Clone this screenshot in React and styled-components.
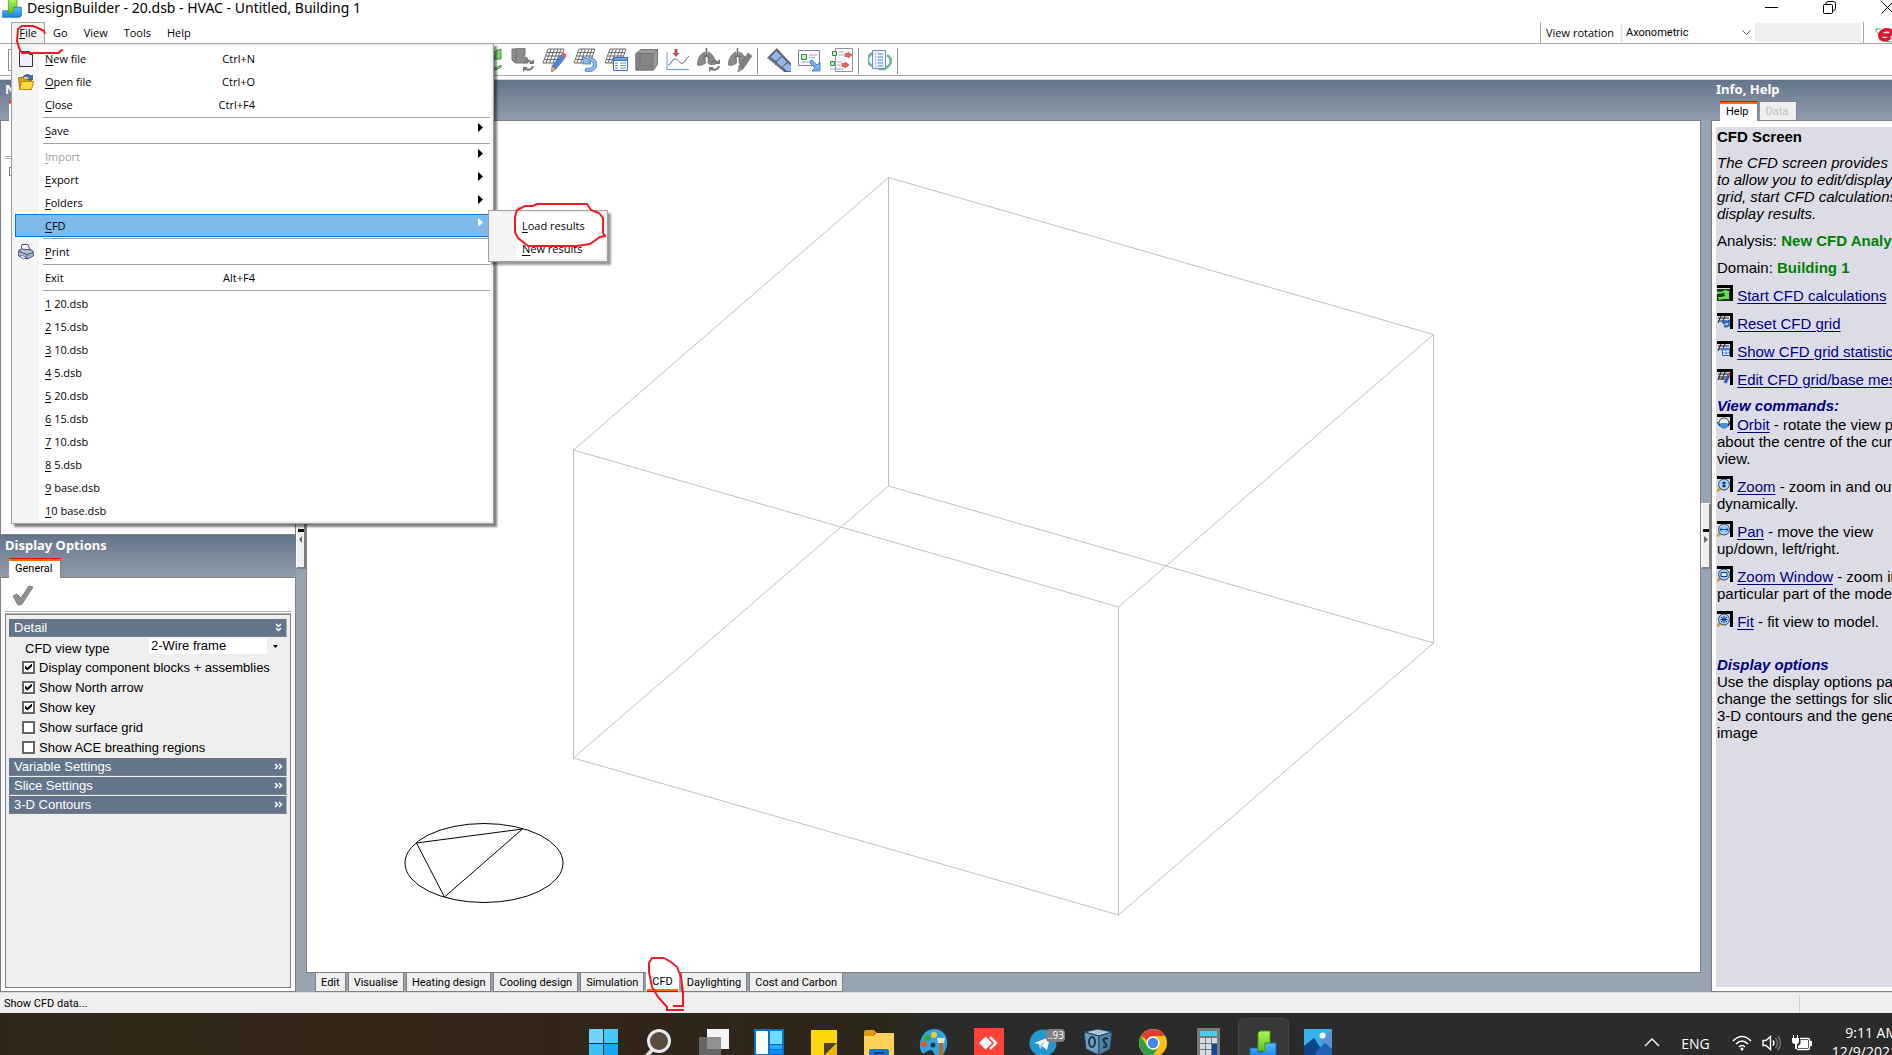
import React, { useState } from 'react';
import styled, { createGlobalStyle, css } from 'styled-components';

const UI_FONT = '"Open Sans", "Noto Sans", sans-serif';
const SMALL_FONT = 'Roboto, "Liberation Sans", sans-serif';
const ARIAL = '"Liberation Sans", Arial, sans-serif';

const GlobalStyle = createGlobalStyle`
    * {
        box-sizing: border-box;
    }
    body {
        margin: 0;
        overflow: hidden;
        background: #fff;
        color: #000;
        font-family: ${UI_FONT};
        font-size: 11px;
    }
    button, select, input {
        font: inherit;
        color: inherit;
        margin: 0;
        padding: 0;
        border: 0;
        background: none;
        border-radius: 0;
    }
`;

/* ---------- icons ---------- */

const BuilderIcon = ({ size = 28 }) => (
    <svg width={size} height={size} viewBox="0 0 28 28">
        <defs>
            <linearGradient id="dbBlue" x1="0" y1="0" x2="0" y2="1">
                <stop offset="0" stopColor="#5cc0ff" />
                <stop offset="1" stopColor="#1583ea" />
            </linearGradient>
            <linearGradient id="dbGreen" x1="0" y1="0" x2="0" y2="1">
                <stop offset="0" stopColor="#b0f45c" />
                <stop offset="1" stopColor="#5ec41c" />
            </linearGradient>
        </defs>
        <path d="M1 18h8v4h5v-9h13v12l-2 2H1z" fill="url(#dbBlue)" stroke="#0d62b8" />
        <path d="M9 3l2-2h10v12h-5v8H9z" fill="url(#dbGreen)" stroke="#47960f" />
    </svg>
);

const PageIcon = () => (
    <svg width="16" height="16" viewBox="0 0 16 16">
        <path d="M1.500 .5h10l3 3v12h-13z" fill="#eef" stroke="#333" />
        <path d="M11.500 .5v3h3" fill="#fff" stroke="#333" />
    </svg>
);

const FolderIcon = () => (
    <svg width="16" height="16" viewBox="0 0 16 16">
        <path d="M.5 3.500h5l1 1.500h7v10H1.500z" fill="#d9a21b" stroke="#a87708" />
        <path d="M5 3c2-3 6-3 8-1l1.500-1v5H10l1.500-1.500C10 2.500 7 2 5 3z" fill="#3f6fa8" stroke="#1d3d68" strokeWidth=".6" />
        <path d="M3.500 7.500h12l-2 8h-12z" fill="#ffd83d" stroke="#b98a0c" />
    </svg>
);

const PrinterIcon = () => (
    <svg width="16" height="16" viewBox="0 0 16 16">
        <path d="M3 7l1-6.500h6L12 6z" fill="#fff" stroke="#4a5078" />
        <path d="M.7 6.500l3-1.500 10 1 1.600 2v4l-6 3-8.600-3z" fill="#b9bfdb" stroke="#434a72" />
        <path d="M1 7.500l8 3v4M9 10.500l6-2" fill="none" stroke="#434a72" />
        <path d="M3 11l5 2-2 2-4-2z" fill="#eef" stroke="#434a72" strokeWidth=".7" />
        <circle cx="12" cy="11" r="1.200" fill="#5fcf3f" />
    </svg>
);

const Grid = () => (
    <g stroke="#6b6b6b" strokeWidth="1" fill="none">
        <path d="M6 1h16L17 15H1z M5 4.500h16M3.500 8h16M2.500 11.500h16" />
        <path d="M9 1L4 15M12.500 1L7.500 15M16 1l-5 14M19 1l-5 14" />
    </g>
);

const Cycle = ({ color = '#777' }) => (
    <g fill="none" stroke={color} strokeWidth="2">
        <path d="M13 15c2-3 6-3 8 0M22 18c-1 4-6 5-8 2" />
        <path d="M23 11v5h-5zM12 24v-5h5z" fill={color} stroke="none" />
    </g>
);

const Lungs = () => (
    <g fill="#8b8b8b" stroke="#6e6e6e" strokeWidth=".8">
        <path d="M8 4C4 5 0 11 .5 17c2 1 6 0 8-2zM11 4c4 1 8 7 7.500 12-3 1-6 1-7.500-1z" />
        <path d="M9.500 0v9M9.500 7l-3 3M9.500 7l3 3" fill="none" strokeWidth="1.500" />
    </g>
);

const Pencil = ({ body = '#4f83d6', tip = '#e4b37c', end = '#e65a5a' }) => (
    <g>
        <path d="M19 7l4 3-9 11-4-3z" fill={body} stroke="#3a5fa0" strokeWidth=".6" />
        <path d="M19 7l2-3 4 3-2 3z" fill={end} />
        <path d="M10 18l4 3-4.500 3z" fill={tip} stroke="#555" strokeWidth=".6" />
    </g>
);

const GreyPencil = () => (
    <g>
        <path d="M20 5l4 3-9 13-4-3z" fill="#808080" stroke="#666" strokeWidth=".6" />
        <path d="M11 18l4 3-5 3z" fill="#9a9a9a" stroke="#666" strokeWidth=".6" />
    </g>
);

const toolDrawings = {
    page: <path d="M.5 1.500h16l6 6v15h-22z" fill="#fff" stroke="#8b8b8b" />,
    calculate: (
        <g>
            <path d="M2 5c5 4 10 3 14-2l5-2v10H12l3-2C12 12 6 12 2 9z" fill="#86d977" stroke="#3f9a3b" />
            <path d="M3 15h8l-3 3c5 3 9 2 13-1v2c-5 4-10 4-14 1l-4 2z" fill="#86d977" stroke="#3f9a3b" />
        </g>
    ),
    blocks: (
        <g>
            <path d="M1 1h4l1-1h8v7l-3 2h4l2 2v4H4l-3-3z" fill="#8d8d8d" stroke="#747474" />
            <path d="M5 1v12" stroke="#6a6a6a" />
            <Cycle />
        </g>
    ),
    gridEdit: <g><Grid /><Pencil /></g>,
    gridReset: (
        <g>
            <Grid />
            <path d="M10 8v8h8l-3-3c4-1 6 2 5 5-1 2-4 3-7 2l-1 3c6 2 11-1 12-6 0-6-6-9-11-6z" fill="#8cb9ee" stroke="#3c74bd" strokeWidth=".8" />
        </g>
    ),
    gridTable: (
        <g>
            <Grid />
            <path d="M9.500 9.500h14v13h-14z" fill="#fff" stroke="#3a72b8" />
            <path d="M9.500 9.500h14v3h-14z" fill="#6aa3e6" stroke="#3a72b8" />
            <path d="M11 15h3M16 15h6M11 17.500h3M16 17.500h6M11 20h3M16 20h6" stroke="#5b91d4" />
        </g>
    ),
    cube: (
        <g stroke="#747474">
            <path d="M1 5.500l5-4h16.500v15l-4 5.500H1z" fill="#9a9a9a" />
            <path d="M1 5.500h17V22H1z" fill="#858585" />
            <path d="M18 5.500l4.500-4M5 5.500V18h13M5 18l-4 4" fill="none" />
        </g>
    ),
    chart: (
        <g fill="none">
            <path d="M1 4v17.500h22" stroke="#6e9bd4" />
            <path d="M2 17c3 0 4-6 7-6 4 0 5 6 8 4 3-1 3-5 6-7" stroke="#6b6580" />
            <path d="M8.500 1h3v4h2l-3.500 4-3.500-4h2z" fill="#b85454" />
        </g>
    ),
    lungsCycle: <g><Lungs /><Cycle /></g>,
    lungsEdit: <g><Lungs /><GreyPencil /></g>,
    film: (
        <g>
            <path d="M10 0l14 15v9h-7L0 10z" fill="#5b6271" />
            <path d="M9.500 3l5 5-5.500 5-5.500-4zM15 9l5 5-5.500 5-5-5zM21 15l3 3v5h-4l-4.500-4z" fill="#8fb8ea" />
            <path d="M11 1.500l13 14M1.500 10.500L17 23.500" stroke="#e8ecf4" strokeDasharray="1.500 1.800" />
        </g>
    ),
    imageExport: (
        <g>
            <path d="M.5 2.500h21v15H.5z" fill="#fafaff" stroke="#7f7fa0" />
            <path d="M3.500 6.500h5v5h-5z" fill="#bdeeb0" stroke="#3d8a3a" />
            <path d="M11 7h8M11 9.500h6M3 14h9" stroke="#a6a6cf" />
            <path d="M12 13l2-1 5 5 3-3v9H14l3-3-4-4z" fill="#77aee8" stroke="#3671b8" strokeWidth=".8" />
        </g>
    ),
    report: (
        <g>
            <path d="M6.500 .5h17v23h-17z" fill="#fafaff" stroke="#9292a8" />
            <path d="M3.500 3.500h4v4h-4zM1.500 13.500h4v4h-4z" fill="#bdeeb0" stroke="#3d8a3a" />
            <path d="M10 4h5M10 7h5M8 14h5M8 17h4M1 21h14" stroke="#a6a6cf" />
            <path d="M16 5.500h3V4l4 3-4 3V8.500h-3zM13 15.500h3V14l4 3-4 3v-1.500h-3z" fill="#f2644b" stroke="#b8402c" strokeWidth=".6" />
        </g>
    ),
    list: (
        <g>
            <path d="M5 5C-2 8-1 15 4 18M19 7c6 4 5 9-1 13-3 2-7 1-9 0" fill="none" stroke="#6db58a" strokeWidth="2.500" />
            <path d="M4.500 2.500h13v18h-13z" fill="#eef4ff" stroke="#6b8fc0" />
            <path d="M7 6h1M7 9h1M7 12h1M7 15h1M7 18h1M9.500 6H15M9.500 9H15M9.500 12H15M9.500 15H15M9.500 18H15" stroke="#5b82bd" />
        </g>
    ),
};

const helpDrawings = {
    calculate: (
        <g>
            <path d="M0 4h13v12H0z" fill="#1c3a1a" />
            <path d="M0 6c3 2 6 0 8-1l4 1v4H7l1-2-8 1zM1 12h4l4-2h3v4H7l-5 1z" fill="#5fe052" />
        </g>
    ),
    reset: (
        <g>
            <path d="M1 5h11M1 8h9M4 3L1 10M8 3L5 10" stroke="#222" fill="none" />
            <path d="M6 7l1 3 5-2c2 4-1 6-5 5" fill="none" stroke="#2e6cc0" strokeWidth="2.500" />
        </g>
    ),
    table: (
        <g>
            <path d="M1 5h11M1 8h9M4 3L1 10M8 3L5 10" stroke="#222" fill="none" />
            <path d="M5.500 7.500h7v7h-7z" fill="#fff" stroke="#2d62b0" />
            <path d="M5 8.500h8" stroke="#3d86e0" strokeWidth="2" />
            <path d="M6 12h6M9 10v5" stroke="#3d86e0" />
        </g>
    ),
    edit: (
        <g>
            <path d="M1 5h11M1 8h9M1 10h8M4 3L1 11M8 3L5 11" stroke="#222" fill="none" />
            <path d="M12 6l-4 8" stroke="#2c5bb5" strokeWidth="3" />
            <path d="M12.500 4l-1 3" stroke="#d04040" strokeWidth="2" />
        </g>
    ),
    orbit: (
        <g>
            <circle cx="7" cy="9" r="5" fill="#eef6ff" stroke="#444" />
            <path d="M2 10c4-2 7 0 11-1-1 6-8 7-11 1z" fill="#3b8fe6" />
            <path d="M0 8l3 4M14 6l-3 6" stroke="#111" />
        </g>
    ),
    zoom: <path d="M7 5.500v6M5 7h4M5 10h4" stroke="#123" strokeWidth="1.200" />,
    pan: <path d="M3 8.500h8M5 6.500l-2 2 2 2M9 6.500l2 2-2 2" stroke="#124a9a" fill="none" />,
    window: <path d="M4 6.500h6v4H4z" stroke="#123a80" fill="#d6ecff" />,
    fit: <path d="M4 6l6 5M10 6l-6 5M7 5v7M3.500 8.500h7" stroke="#14307a" fill="none" />,
};

const lensIcons = ['zoom', 'pan', 'window', 'fit'];

const HelpIcon = ({ name }) => (
    <HelpGlyph width="16" height="16" viewBox="0 0 16 16">
        {lensIcons.includes(name) && (
            <g>
                <path d="M0 15l4-3" stroke="#d79a2c" strokeWidth="3" />
                <circle cx="7" cy="8.500" r="5.500" fill="#9fd0fb" stroke="#3c4a66" />
            </g>
        )}
        {helpDrawings[name]}
        <path d="M0 0h16v16h-3V3H0z" fill="#000" />
    </HelpGlyph>
);

/* taskbar icons, drawn in a 30px box */
const taskIcons = {
    Start: (
        <g>
            <path d="M0 0h14v14H0z" fill="#6fd5ff" />
            <path d="M15 0h14v14H15z" fill="#46c8fc" />
            <path d="M0 15h14v14H0z" fill="#3cc0fa" />
            <path d="M15 15h14v14H15z" fill="#1ba5f5" />
        </g>
    ),
    Search: (
        <g>
            <path d="M9 20l-9 10" stroke="#dcdcdc" strokeWidth="4" />
            <circle cx="15" cy="12" r="10.500" fill="#5a4d40" stroke="#e6e8ea" strokeWidth="3" />
        </g>
    ),
    'Task view': (
        <g>
            <path d="M8 0h22v20H8z" fill="#f4f4f4" />
            <path d="M0 8h22v22H0z" fill="#777" opacity=".8" />
        </g>
    ),
    Widgets: (
        <g>
            <path d="M0 0h30v30H0z" fill="#0a6ecb" />
            <rect x="2" y="2" width="12" height="23" rx="1" fill="#fff" />
            <path d="M16 2h12v13H16z" fill="#6fdcff" />
            <path d="M16 16h12v4H16z" fill="#1ea9ff" />
            <path d="M16 21h12v4H16z" fill="#0a8cf5" />
        </g>
    ),
    'Sticky Notes': (
        <g>
            <path d="M2 1h26v29H2z" fill="#ffd60a" />
            <path d="M15 14h13L15 27z" fill="#4b4336" />
            <path d="M28 14v16H15v-3z" fill="#f2b40c" />
        </g>
    ),
    'File Explorer': (
        <g>
            <path d="M0 3q0-2 2-2h8l3 3h-2l-2 3H0z" fill="#e09c10" />
            <path d="M0 7h9l3-3h18v26H0z" fill="#ffcf58" />
            <path d="M5 30v-8q0-2 2-2h16q2 0 2 2v8z" fill="#1076cf" />
            <path d="M10 24h10" stroke="#0a3d78" strokeWidth="2" />
        </g>
    ),
    Paint: (
        <g>
            <path d="M15 0c9 0 14 7 13 16-1 7-5 12-9 12-5 0-3-6-7-7-4 0-6 5-9 3-5-7-1-24 12-24z" fill="#2fa4e4" />
            <circle cx="15" cy="6" r="3" fill="#ffc52e" />
            <circle cx="8" cy="9" r="3" fill="#3aa82f" />
            <circle cx="5" cy="15" r="3" fill="#e8552d" />
            <circle cx="14" cy="16" r="2.500" fill="#26323b" />
            <path d="M18 9h8l-1 5h-6z" fill="#f3e3c5" />
            <path d="M20 14h4v16h-4z" fill="#b4692c" />
        </g>
    ),
    AnyDesk: (
        <g>
            <path d="M0-1h30v31H0z" fill="#ff4136" />
            <path d="M5 14l6.500-6.500L18 14l-6.500 6.500z" fill="#fff" />
            <path d="M16 8l6 6-6 6" fill="none" stroke="#fff" strokeWidth="2.500" />
        </g>
    ),
    Telegram: (
        <g>
            <circle cx="14" cy="14" r="13.500" fill="#2598d2" />
            <path d="M5 14l16-6-3 13-5-4-2 3-1-5z" fill="#fff" />
            <path d="M11 16l7-6-5 7-2 3z" fill="#a9cfe6" />
        </g>
    ),
    OpenStudio: (
        <g stroke="#24445c">
            <path d="M0 3l14-3 14 3-13 4z" fill="#a8c8dc" />
            <path d="M0 3l15 4v19L2 20z" fill="#6f9cbb" />
            <path d="M28 3L15 7v19l11-6z" fill="#4f81a4" />
            <ellipse cx="8" cy="13" rx="3" ry="5" fill="none" stroke="#17344a" strokeWidth="2" />
            <path d="M24 10c-4-2-6 1-3 4s1 5-2 4" fill="none" stroke="#17344a" strokeWidth="2" />
        </g>
    ),
    Chrome: (
        <g>
            <circle cx="14" cy="14" r="14" fill="#fbc116" />
            <path d="M2 7a14 14 0 0 1 24 0H14a7 7 0 0 0-6 4z" fill="#df3f33" />
            <path d="M2 7a14 14 0 0 0 11 21l6-9a7 7 0 0 1-11-2z" fill="#2b9f4a" />
            <circle cx="14" cy="14" r="6.500" fill="#fff" />
            <circle cx="14" cy="14" r="5.200" fill="#4285f4" />
        </g>
    ),
    Calculator: (
        <g>
            <path d="M3-1h23v31H3z" fill="#747a80" />
            <path d="M6 2h17v5H6z" fill="#42d0f0" />
            <path d="M6 9h5v5H6zM12 9h5v5h-5zM18 9h5v5h-5zM6 15h5v5H6zM12 15h5v5h-5zM6 21h5v5H6zM12 21h5v5h-5z" fill="#d9dde2" />
            <path d="M18 15h5v11h-5z" fill="#0b4a94" />
        </g>
    ),
    DesignBuilder: <BuilderIcon />,
    Photos: (
        <g>
            <path d="M0 0h28v30H0z" fill="#35b2ec" />
            <path d="M28 0v20L14 12z" fill="#6f7fd0" opacity=".6" />
            <path d="M0 17l10-8 14 21H0z" fill="#0d4387" />
            <path d="M12 22l9-8 7 6v10H12z" fill="#1f62b5" />
            <circle cx="18.500" cy="6.500" r="3" fill="#fff" />
        </g>
    ),
};

/* ---------- data ---------- */

const fileMenu = [
    { label: 'New file', keys: 'Ctrl+N', icon: <PageIcon /> },
    { label: 'Open file', keys: 'Ctrl+O', icon: <FolderIcon /> },
    { label: 'Close', keys: 'Ctrl+F4' },
    'separator',
    { label: 'Save', more: true },
    'separator',
    { label: 'Import', more: true, disabled: true },
    { label: 'Export', more: true },
    { label: 'Folders', more: true },
    { label: 'CFD', more: true, open: ['Load results', 'New results'] },
    'separator',
    { label: 'Print', icon: <PrinterIcon /> },
    'separator',
    { label: 'Exit', keys: 'Alt+F4', plain: true },
    'separator',
    { label: '1 20.dsb' },
    { label: '2 15.dsb' },
    { label: '3 10.dsb' },
    { label: '4 5.dsb' },
    { label: '5 20.dsb' },
    { label: '6 15.dsb' },
    { label: '7 10.dsb' },
    { label: '8 5.dsb' },
    { label: '9 base.dsb' },
    { label: '10 base.dsb' },
];

const toolGroups = [
    ['calculate', 'blocks', 'gridEdit', 'gridReset', 'gridTable', 'cube', 'chart', 'lungsCycle', 'lungsEdit'],
    ['film', 'imageExport', 'report'],
    ['list'],
];

const viewTabs = ['Edit', 'Visualise', 'Heating design', 'Cooling design', 'Simulation', 'CFD', 'Daylighting', 'Cost and Carbon'];

const commands = [
    ['calculate', 'Start CFD calculations'],
    ['reset', 'Reset CFD grid'],
    ['table', 'Show CFD grid statistics'],
    ['edit', 'Edit CFD grid/base mesh'],
];

const viewCommands = [
    ['orbit', 'Orbit', ' - rotate the view point', 'about the centre of the current', 'view.'],
    ['zoom', 'Zoom', ' - zoom in and out', 'dynamically.'],
    ['pan', 'Pan', ' - move the view', 'up/down, left/right.'],
    ['window', 'Zoom Window', ' - zoom in on a', 'particular part of the model.'],
    ['fit', 'Fit', ' - fit view to model.'],
];

/* ---------- pieces ---------- */

const Mnemonic = ({ text }) => (
    <span><u>{text[0]}</u>{text.slice(1)}</span>
);

const FileMenu = () => (
    <Menu>
        {fileMenu.map((item, i) => item === 'separator' ? <Separator key={i} /> : (
            <ItemBox key={i}>
                <Item $active={!!item.open} disabled={item.disabled}>
                    <ItemIcon>{item.icon}</ItemIcon>
                    {item.plain ? <span>{item.label}</span> : <Mnemonic text={item.label} />}
                    {item.keys && <Keys>{item.keys}</Keys>}
                    {item.more && (
                        <MoreArrow width="5" height="9" viewBox="0 0 5 9">
                            <path d="M0 0l5 4.500L0 9z" fill={item.open ? '#fff' : '#000'} />
                        </MoreArrow>
                    )}
                </Item>
                {item.open && (
                    <SubMenu>
                        {item.open.map(label => (
                            <Item key={label}>
                                <ItemIcon />
                                <Mnemonic text={label} />
                            </Item>
                        ))}
                    </SubMenu>
                )}
            </ItemBox>
        ))}
    </Menu>
);

const SectionArrow = ({ down }) => (
    <svg width="9" height="9" viewBox="0 0 9 9">
        <path
            d={down ? 'M2 1l2.500 2.500L7 1M2 5l2.500 2.500L7 5' : 'M1 2l2.500 2.500L1 7M5 2l2.500 2.500L5 7'}
            fill="none"
            stroke="#fff"
            strokeWidth="1.500"
        />
    </svg>
);

const DisplayOptions = () => {
    const [options, setOptions] = useState([
        { label: 'Display component blocks + assemblies', on: true },
        { label: 'Show North arrow', on: true },
        { label: 'Show key', on: true },
        { label: 'Show surface grid', on: false },
        { label: 'Show ACE breathing regions', on: false },
    ]);

    const toggle = (index) => {
        setOptions(options.map((o, i) => i === index ? { ...o, on: !o.on } : o));
    }

    return (
        <Panel>
            <ApplyRow>
                <ApplyButton aria-label="Apply">
                    <svg width="22" height="21" viewBox="0 0 22 21">
                        <path d="M1 11l4-2 4 4L17 1l4 1L10 19l-4 1z" fill="#909090" stroke="#7c7c7c" />
                    </svg>
                </ApplyButton>
            </ApplyRow>
            <OptionsBox>
                <SectionBar>Detail <SectionArrow down /></SectionBar>
                <SelectRow>
                    <label htmlFor="view-type">CFD view type</label>
                    <SelectBox>
                        <PlainSelect id="view-type">
                            <option>2-Wire frame</option>
                        </PlainSelect>
                        <SelectArrow>
                            <svg width="5" height="3" viewBox="0 0 5 3"><path d="M0 0h5L2.500 3z" /></svg>
                        </SelectArrow>
                    </SelectBox>
                </SelectRow>
                <CheckList>
                    {options.map((o, i) => (
                        <CheckRow key={o.label}>
                            <CheckBox type="checkbox" checked={o.on} onChange={() => toggle(i)} />
                            {o.label}
                        </CheckRow>
                    ))}
                </CheckList>
                {['Variable Settings', 'Slice Settings', '3-D Contours'].map(name => (
                    <SectionBar key={name}>{name} <SectionArrow /></SectionBar>
                ))}
            </OptionsBox>
        </Panel>
    );
}

const Drawing = () => (
    <Canvas viewBox="307 121 1393 851" preserveAspectRatio="xMidYMid meet">
        <g fill="none" stroke="#c0c0c0">
            <path d="M888.500 177.500L1433.500 334.500L1118.500 607L573.500 450z" />
            <path d="M888.500 486L1433.500 643L1118.500 915L573.500 758z" />
            <path d="M888.500 177.500V486M1433.500 334.500V643M1118.500 607V915M573.500 450V758" />
        </g>
        <g fill="none" stroke="#000">
            <ellipse cx="484" cy="863" rx="79" ry="39.500" />
            <path d="M416.500 843L522.500 829L444.500 897z" />
        </g>
    </Canvas>
);

const HelpPanel = () => (
    <HelpText>
        <HelpTitle>CFD Screen</HelpTitle>
        <Intro>
            The CFD screen provides tools<br />
            to allow you to edit/display the<br />
            grid, start CFD calculations and<br />
            display results.
        </Intro>
        <Line>Analysis: <Value>New CFD Analysis</Value></Line>
        <Line>Domain: <Value>Building 1</Value></Line>
        {commands.map(([icon, label]) => (
            <Command key={icon}><HelpIcon name={icon} /> <HelpLink href="#">{label}</HelpLink></Command>
        ))}
        <HelpHeading>View commands:</HelpHeading>
        {viewCommands.map(([icon, label, first, ...rest]) => (
            <ViewCommand key={icon}>
                <HelpIcon name={icon} /> <HelpLink href="#">{label}</HelpLink>{first}
                {rest.map(line => <div key={line}>{line}</div>)}
            </ViewCommand>
        ))}
        <HelpHeading $spaced>Display options</HelpHeading>
        <div>
            Use the display options panel to<br />
            change the settings for slices,<br />
            3-D contours and the general<br />
            image
        </div>
    </HelpText>
);

const Handle = ({ flip }) => (
    <Splitter>
        <Grip aria-label="Collapse panel">
            <svg width="6" height="14" viewBox="0 0 6 14">
                <path d="M0 0h6v3H0z" />
                <path d={flip ? 'M1 7l4 3.500L1 14z' : 'M4 7L1 10.500 4 14z'} fill="#666" />
            </svg>
        </Grip>
    </Splitter>
);

const Taskbar = () => (
    <TaskbarRow>
        <span />
        <Tasks>
            {Object.keys(taskIcons).map(name => (
                <Task key={name} aria-label={name} $active={name === 'DesignBuilder'}>
                    <svg width="30" height="30" viewBox="0 -1 30 30">{taskIcons[name]}</svg>
                    {name === 'Telegram' && <Unread>..93</Unread>}
                </Task>
            ))}
        </Tasks>
        <Tray>
            <svg width="16" height="9" viewBox="0 0 16 9"><path d="M1 8l7-7 7 7" fill="none" stroke="#eee" strokeWidth="1.500" /></svg>
            <Language>ENG</Language>
            <TrayIcons>
                <svg width="20" height="16" viewBox="0 0 20 16" fill="none" stroke="#fff" strokeWidth="1.600">
                    <path d="M1 6q9-9 18 0M4 9q6-6 12 0M7 12q3-3 6 0" />
                    <circle cx="10" cy="14" r="1.500" fill="#fff" stroke="none" />
                </svg>
                <svg width="20" height="16" viewBox="0 0 20 16" fill="none" stroke="#fff" strokeWidth="1.400">
                    <path d="M1 5.500h3L8.500 1.500v13L4 10.500H1z" />
                    <path d="M11 5.500q2 2.500 0 5" />
                    <path d="M13.500 3q4 5 0 10M16 1q5 7 0 14" stroke="#777" />
                </svg>
                <svg width="20" height="16" viewBox="0 0 20 16">
                    <path d="M0 3h7v3q0 3-2 3v5H3V9Q0 9 0 6zM1 0h1v3H1zM5 0h1v3H5z" fill="#fff" />
                    <path d="M8 3.500h8q1.500 0 1.500 1.500v8q0 1.500-1.500 1.500H5" fill="none" stroke="#fff" strokeWidth="1.400" />
                    <path d="M8.500 5H16v8H6V11l2.500-2zM18 6h2v5h-2z" fill="#fff" />
                </svg>
            </TrayIcons>
            <Clock>9:11 AM<br />12/9/2021</Clock>
        </Tray>
    </TaskbarRow>
);

/* red pen marks lying over the window */
const PenMarks = () => (
    <Marks width="700" height="1020" viewBox="0 0 700 1020">
        <path d="M45 34L44 31L38 28L33 26H22L18 29L17 41L19 48L22 53H59L60 51L63 50" />
        <path d="M537 204H587L591 210L599 213L603 218V233L605 236L600 237L590 244L577 246H528L518 238L515 232V217L517 210L525 206L533 206z" />
        <path d="M664 958H652L649 963V972L652 987L658 997L667 1007V1010H684M673 1006H683V992L681 977L677 967L671 962L664 958" />
    </Marks>
);

const App = () => {
    const [tab, setTab] = useState('CFD');

    return (
        <Window>
            <GlobalStyle />
            <TitleBar>
                <BuilderIcon size={20} />
                <Title>DesignBuilder - 20.dsb - HVAC - Untitled, Building 1</Title>
                <WindowButton aria-label="Minimise"><svg width="13" height="13" viewBox="0 0 13 13"><path d="M0 6.500h13" /></svg></WindowButton>
                <WindowButton aria-label="Restore">
                    <svg width="13" height="13" viewBox="0 0 13 13">
                        <path d="M.5 4.500q0-1 1-1h7q1 0 1 1v7q0 1-1 1h-7q-1 0-1-1zM3 3.500V2.500Q3 .5 5 .5h5.500q2 0 2 2v5q0 2-2 2h-1" />
                    </svg>
                </WindowButton>
                <WindowButton aria-label="Close"><svg width="13" height="13" viewBox="0 0 13 13"><path d="M.5.5l12 12M12.500.5l-12 12" /></svg></WindowButton>
            </TitleBar>
            <MenuBar>
                <MenuHolder>
                    <MenuButton $open><Mnemonic text="File" /></MenuButton>
                    <FileMenu />
                </MenuHolder>
                {['Go', 'View', 'Tools', 'Help'].map(name => <MenuButton key={name}>{name}</MenuButton>)}
                <Rotation>
                    <RotationLabel htmlFor="rotation">View rotation</RotationLabel>
                    <RotationBox>
                        <PlainSelect id="rotation">
                            <option>Axonometric</option>
                        </PlainSelect>
                        <svg width="9" height="6" viewBox="0 0 9 6"><path d="M.5.5l4 4 4-4" fill="none" stroke="#555" /></svg>
                    </RotationBox>
                    <EmptyField />
                </Rotation>
                <Brand>
                    <svg width="24" height="16" viewBox="0 0 24 16">
                        <path d="M6 2H1q-1 3 3 5M8 13q6 4 14 0" fill="none" stroke="#35b35a" />
                        <path d="M6 8h9q3-4-1-5-6-1-9 4-1 5 4 6 4 0 6-3" fill="none" stroke="#e0142c" strokeWidth="3.500" />
                    </svg>
                </Brand>
            </MenuBar>
            <Toolbar>
                <ToolButton aria-label="New"><svg width="24" height="24" viewBox="0 0 24 24">{toolDrawings.page}</svg></ToolButton>
                <HiddenTools />
                {toolGroups.map((group, i) => (
                    <ToolGroup key={i}>
                        {group.map(name => (
                            <ToolButton key={name} aria-label={name}>
                                <svg width="24" height="24" viewBox="0 0 24 24">{toolDrawings[name]}</svg>
                            </ToolButton>
                        ))}
                    </ToolGroup>
                ))}
            </Toolbar>
            <Workspace>
                <LeftColumn>
                    <PanelHead>
                        <PanelTitle>Navigate</PanelTitle>
                        <Tabs><Tab $active>Site</Tab></Tabs>
                    </PanelHead>
                    <Panel><NavTools /><NavNode /></Panel>
                    <PanelHead $shaded>
                        <PanelTitle>Display Options</PanelTitle>
                        <Tabs><Tab $active>General</Tab></Tabs>
                    </PanelHead>
                    <DisplayOptions />
                </LeftColumn>
                <Handle />
                <CenterColumn>
                    <CanvasBox><Drawing /></CanvasBox>
                    <ViewTabs>
                        {viewTabs.map(name => (
                            <ViewTab key={name} $active={name === tab} onClick={() => setTab(name)}>{name}</ViewTab>
                        ))}
                    </ViewTabs>
                </CenterColumn>
                <Handle flip />
                <RightColumn>
                    <PanelHead>
                        <PanelTitle>Info, Help</PanelTitle>
                        <Tabs>
                            <Tab $active>Help</Tab>
                            <Tab disabled>Data</Tab>
                        </Tabs>
                    </PanelHead>
                    <HelpFrame><HelpPanel /></HelpFrame>
                </RightColumn>
            </Workspace>
            <StatusBar>
                <span>Show CFD data...</span>
                <StatusCell />
            </StatusBar>
            <Taskbar />
            <PenMarks />
        </Window>
    );
}

/* ---------- styles ---------- */

const Window = styled.div`
    display: grid;
    grid-template-rows: 22px 22px 36px 1fr 21px 42px;
    grid-template-columns: 100%;
    height: 100vh;
    position: relative;
    overflow: hidden;
`;

const TitleBar = styled.header`
    display: flex;
    align-items: center;
    overflow: hidden;
    padding: 0 0 7px 2px;
`;

const Title = styled.h1`
    flex: 1;
    margin: 0 0 0 5px;
    font-family: "Noto Sans", sans-serif;
    font-size: 14px;
    line-height: 18px;
    font-weight: normal;
`;

const WindowButton = styled.button`
    width: 58px;
    height: 14px;
    flex: none;
    display: flex;
    justify-content: center;
    svg {
        fill: none;
        stroke: #000;
    }
    &:last-child {
        margin-right: -24px;
    }
`;

const MenuBar = styled.nav`
    display: flex;
    padding-left: 11px;
    border-bottom: 1px solid #a8a8a8;
`;

const MenuHolder = styled.div`
    position: relative;
    display: flex;
`;

const MenuButton = styled.button`
    padding: 0 8px;
    line-height: 20px;
    font-size: 11px;
    ${props => props.$open && css`
        width: 34px;
        padding: 0 7px;
        background: #f2f2f2;
        border: 1px solid #a0a0a0;
        border-bottom: 0;
    `}
`;

const Menu = styled.div`
    position: absolute;
    z-index: 5;
    top: 21px;
    left: 0;
    width: 483px;
    padding: 3px 3px 1px;
    border: 1px solid #a0a0a0;
    background: linear-gradient(to right, #f5f5f5 27px, #fff 27px);
    box-shadow: inset 0 0 0 2px #f0f0f0, 3px 3px 2px rgba(0, 0, 0, .5);
`;

const ItemBox = styled.div`
    position: relative;
`;

const Item = styled.button`
    display: flex;
    align-items: center;
    width: 100%;
    height: 23px;
    padding-right: 6px;
    border: 1px solid transparent;
    font-size: 11px;
    line-height: 16px;
    text-align: left;
    ${props => props.$active && css`
        background: #7eb9ea;
        border-color: #0078d7;
    `}
    &:disabled span {
        color: #a0a0a0;
    }
    span {
        flex: 0 1 90px;
        white-space: nowrap;
    }
    u {
        text-underline-offset: 2px;
    }
`;

const ItemIcon = styled.i`
    flex: none;
    width: 29px;
    padding-left: 2px;
    height: 16px;
`;

const Keys = styled.kbd`
    width: 120px;
    font-family: inherit;
    text-align: right;
`;

const MoreArrow = styled.svg`
    margin: 0 0 7px auto;
`;

const Separator = styled.hr`
    height: 1px;
    margin: 1px 0 1px 28px;
    border: 0;
    background: #a0a0a0;
`;

const SubMenu = styled.div`
    position: absolute;
    z-index: 6;
    top: -4px;
    left: 473px;
    width: 120px;
    padding: 3px 3px 1px;
    border: 1px solid #a0a0a0;
    background: linear-gradient(to right, #f5f5f5 27px, #fff 27px);
    box-shadow: inset 0 0 0 2px #f0f0f0, 3px 3px 2px rgba(0, 0, 0, .4);
`;

const Rotation = styled.div`
    display: flex;
    align-items: center;
    margin-left: auto;
    padding: 0 2px 0 5px;
    border: 1px solid #a8a8a8;
    border-width: 0 1px;
`;

const RotationLabel = styled.label`
    font-size: 11px;
    width: 77px;
    border-right: 3px solid #efefef;
    line-height: 18px;
`;

const PlainSelect = styled.select`
    appearance: none;
    flex: 1;
    min-width: 0;
    outline: 0;
`;

const RotationBox = styled.div`
    display: flex;
    align-items: center;
    width: 132px;
    padding: 0 4px 0 3px;
    font-family: ${SMALL_FONT};
`;

const EmptyField = styled.div`
    width: 106px;
    height: 19px;
    background: #efefef;
`;

const Brand = styled.div`
    width: 28px;
    padding: 5px 0 0 11px;
    overflow: hidden;
`;

const Toolbar = styled.div`
    display: flex;
    padding: 4px 0 0 8px;
    border-bottom: 1px solid #d8d8d8;
    background: linear-gradient(#a8a8a8, #a8a8a8) 0 31px / 100% 1px no-repeat, #fff;
`;

const HiddenTools = styled.div`
    width: 448px;
`;

const ToolButton = styled.button`
    width: 24px;
    height: 24px;
    flex: none;
    svg {
        display: block;
    }
`;

const ToolGroup = styled.div`
    display: flex;
    gap: 7px;
    height: 26px;
    padding-right: 5px;
    margin-right: 9px;
    border-right: 1px solid #909090;
`;

const Workspace = styled.main`
    display: grid;
    grid-template-columns: 296px 10px minmax(0, 1fr) 10px 181px;
    min-height: 0;
    background: linear-gradient(#64748a, #919dac) 0 0 / 100% 40px no-repeat, #97a3b0;
`;

const LeftColumn = styled.section`
    display: grid;
    grid-template-rows: 40px minmax(0, 1fr) 42px minmax(0, 1fr);
`;

const PanelHead = styled.div`
    display: flex;
    flex-direction: column;
    justify-content: space-between;
    ${props => props.$shaded && css`
        padding-top: 1px;
        background: linear-gradient(#64748a, #919dac);
    `}
`;

const PanelTitle = styled.h2`
    margin: 0;
    padding-left: 5px;
    color: #fff;
    font-family: "Noto Sans", sans-serif;
    font-size: 13px;
    line-height: 18px;
`;

const Tabs = styled.div`
    display: flex;
    gap: 2px;
    padding-left: 9px;
    margin-bottom: -1px;
    position: relative;
`;

const Tab = styled.button`
    height: 19px;
    padding: 0 8px 0 6px;
    border: 1px solid #808080;
    border-width: 1px 1px 0 0;
    background: #efefef;
    font-family: ${SMALL_FONT};
    line-height: 19px;
    &:disabled {
        color: #c0c0c0;
    }
    ${props => props.$active && css`
        height: 20px;
        border-top: 1px solid #f00;
        background: linear-gradient(#ff7000 2px, #fff 2px);
    `}
`;

const Panel = styled.div`
    display: flex;
    flex-direction: column;
    padding: 0 4px 3px;
    border: 1px solid #808080;
    background: #fff;
    min-height: 0;
`;

const NavTools = styled.div`
    height: 38px;
    border-bottom: 3px double #b0b0b0;
`;

const NavNode = styled.span`
    width: 9px;
    height: 9px;
    margin: 8px 4px;
    border: 1px solid #808080;
`;

const ApplyRow = styled.div`
    height: 36px;
    border-bottom: 3px double #b0b0b0;
`;

const ApplyButton = styled.button`
    padding: 7px;
`;

const OptionsBox = styled.div`
    flex: 1;
    display: flex;
    flex-direction: column;
    padding: 4px 3px;
    border: 1px solid #808080;
    background: #efefef;
    font-family: ${ARIAL};
    font-size: 13px;
`;

const SectionBar = styled.button`
    display: flex;
    justify-content: space-between;
    align-items: center;
    height: 18px;
    margin-bottom: 1px;
    padding: 0 3px 0 5px;
    border-right: 1px solid #b0b0b0;
    border-bottom: 1px solid #808080;
    background: #64748a;
    color: #fff;
    line-height: 16px;
`;

const SelectRow = styled.div`
    display: flex;
    justify-content: space-between;
    height: 19px;
    padding: 0 3px 0 16px;
    line-height: 22px;
`;

const SelectBox = styled.div`
    display: flex;
    width: 135px;
    height: 16px;
    padding-left: 2px;
    background: #fff;
    line-height: 16px;
`;

const SelectArrow = styled.span`
    width: 17px;
    display: grid;
    place-items: center;
    background: #efefef;
`;

const CheckList = styled.div`
    padding-bottom: 1px;
`;

const CheckRow = styled.label`
    display: flex;
    align-items: center;
    gap: 4px;
    height: 20px;
    padding-left: 13px;
    white-space: nowrap;
`;

const CheckBox = styled.input`
    appearance: none;
    flex: none;
    width: 13px;
    height: 13px;
    border: 2px solid #666;
    background: #fff;
    &:checked::before {
        content: '';
        display: block;
        width: 7px;
        height: 7px;
        margin: 1px;
        background: #000;
        clip-path: polygon(0 30%, 35% 60%, 100% 0, 100% 40%, 35% 100%, 0 70%);
    }
`;

const Splitter = styled.div`
    display: flex;
    align-items: center;
`;

const Grip = styled.button`
    display: grid;
    place-items: center;
    width: 100%;
    height: 66px;
    border: 1px solid #fff;
    border-right: 2px solid #808080;
    border-bottom: 2px solid #808080;
    background: #efefef;
`;

const CenterColumn = styled.section`
    display: grid;
    grid-template-rows: minmax(0, 1fr) 19px;
    padding-top: 40px;
`;

const CanvasBox = styled.div`
    min-height: 0;
    border: 1px solid #808080;
    background: #fff;
`;

const Canvas = styled.svg`
    display: block;
    width: 100%;
    height: 100%;
`;

const ViewTabs = styled.div`
    display: flex;
    gap: 2px;
    padding-left: 9px;
`;

const ViewTab = styled.button`
    padding: 0 5px;
    border: 1px solid #808080;
    border-top: 0;
    background: #efefef;
    font-family: ${SMALL_FONT};
    line-height: 19px;
    white-space: nowrap;
    ${props => props.$active && css`
        margin-top: -1px;
        border-color: #fff;
        border-bottom: 1px solid #e00000;
        background: linear-gradient(to top, #ff7000 2px, #fff 2px);
    `}
`;

const RightColumn = styled.section`
    display: grid;
    grid-template-rows: 40px minmax(0, 1fr);
    min-width: 0;
`;

const HelpFrame = styled.div`
    min-height: 0;
    padding: 6px 0 4px 4px;
    border: 1px solid #808080;
    border-right: 0;
    background: #fff;
`;

const HelpText = styled.article`
    height: 100%;
    padding: 1px 0 0 1px;
    overflow: hidden;
    white-space: nowrap;
    background: #dcdce6;
    font-family: ${ARIAL};
    font-size: 15px;
    line-height: 17px;
`;

const HelpTitle = styled.h3`
    margin: 0 0 9px;
    font-size: 15px;
`;

const Intro = styled.p`
    margin: 0;
    font-style: italic;
`;

const Line = styled.p`
    margin: 10px 0 0;
`;

const Value = styled.b`
    color: #008000;
`;

const Command = styled.p`
    height: 17px;
    margin: 11px 0 0;
`;

const HelpGlyph = styled.svg`
    margin-top: -2px;
    vertical-align: top;
`;

const HelpLink = styled.a`
    color: #000080;
    text-underline-offset: 2px;
`;

const HelpHeading = styled.h4`
    margin: ${props => props.$spaced ? '26px 0 0' : '9px 0 2px'};
    color: #000080;
    font-size: 15px;
    font-style: italic;
`;

const ViewCommand = styled.div`
    & + & {
        margin-top: 11px;
    }
`;

const StatusBar = styled.footer`
    display: flex;
    justify-content: space-between;
    align-items: center;
    padding: 1px 0 0 4px;
    border-top: 1px solid #d8d8d8;
    background: #efefef;
    font-family: ${SMALL_FONT};
    line-height: 18px;
`;

const StatusCell = styled.div`
    width: 93px;
    height: 18px;
    border-left: 1px solid #d0d0d0;
`;

const TaskbarRow = styled.div`
    display: grid;
    grid-template-columns: 1fr auto 546px;
    overflow: hidden;
    background: linear-gradient(to right, #2e2717 0, #332517 25%, #30251a 38%, #2b2717 46%, #2b2b2b 50%);
`;

const Tasks = styled.div`
    display: flex;
`;

const Task = styled.button`
    position: relative;
    width: 55px;
    height: 52px;
    padding-top: 15px;
    display: flex;
    justify-content: center;
    ${props => props.$active && css`
        height: 48px;
        width: 51px;
        margin: 5px 2px 0;
        padding-top: 10px;
        border: 1px solid #444;
        border-radius: 5px;
        background: #383838;
    `}
`;

const Unread = styled.span`
    position: absolute;
    top: 16px;
    right: 6px;
    padding: 0 1px;
    border-radius: 4px;
    background: #808080;
    color: #fff;
    font-size: 10px;
    line-height: 13px;
`;

const Tray = styled.div`
    display: flex;
    justify-content: flex-end;
    align-items: flex-start;
    color: #fff;
    font-size: 14px;
    line-height: 19px;
    & > svg {
        margin-top: 25px;
    }
`;

const Language = styled.span`
    margin: 21px 22px 0 21px;
`;

const TrayIcons = styled.div`
    display: flex;
    gap: 10px;
    margin-top: 22px;
`;

const Clock = styled.time`
    margin: 10px -6px 0 20px;
    text-align: right;
`;

const Marks = styled.svg`
    position: absolute;
    z-index: 10;
    top: 0;
    left: 0;
    fill: none;
    stroke: #ed1c24;
    stroke-width: 2;
    pointer-events: none;
`;

export default App;
